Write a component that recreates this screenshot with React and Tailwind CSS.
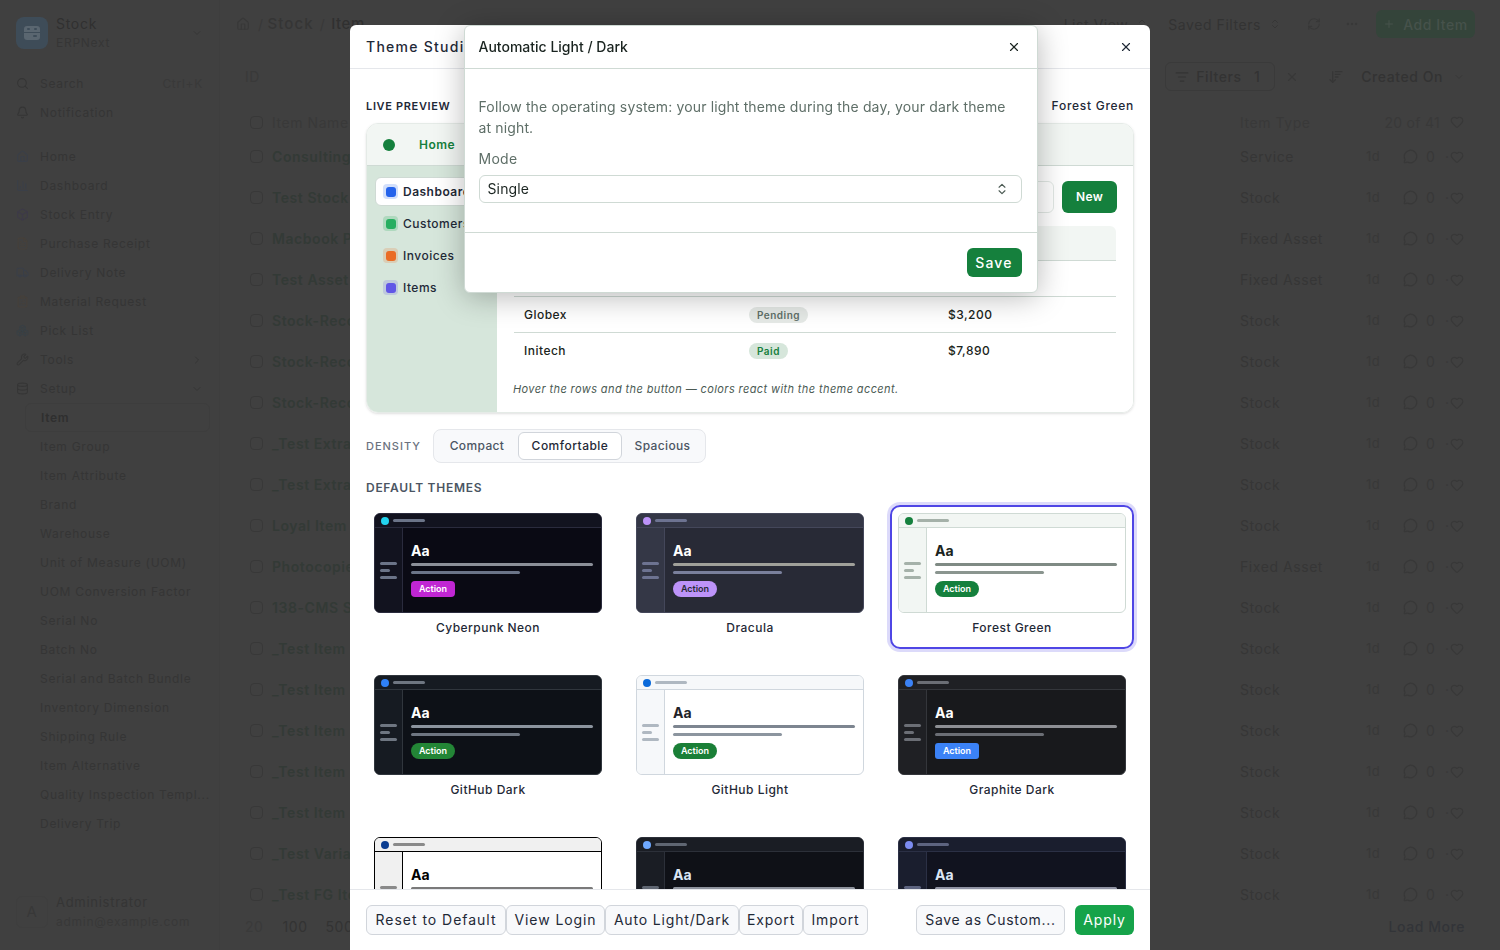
import React from "react";
import {
  Bell, BarChart3, Box, Boxes, ChevronDown, ChevronRight, ChevronsUpDown, ClipboardList, Database, FileText,
  Heart, Home, ListFilter, ArrowDownWideNarrow, MessageCircle, MoreHorizontal, Plus, RefreshCw, Search, Truck, Wrench, X,
} from "lucide-react";

const navTop = [
  { name: "Home", icon: Home, color: "text-[#3a3f48]" },
  { name: "Dashboard", icon: BarChart3, color: "text-[#3a3f48]" },
  { name: "Stock Entry", icon: Box, color: "text-[#3d3a48]" },
  { name: "Purchase Receipt", icon: FileText, color: "text-[#46403a]" },
  { name: "Delivery Note", icon: Truck, color: "text-[#3a3f48]" },
  { name: "Material Request", icon: ClipboardList, color: "text-[#46403a]" },
  { name: "Pick List", icon: Boxes, color: "text-[#394045]" },
  { name: "Tools", icon: Wrench, color: "text-[#363636]", right: "r" },
  { name: "Setup", icon: Database, color: "text-[#363636]", right: "d" },
];

const navSub = [
  "Item", "Item Group", "Item Attribute", "Brand", "Warehouse", "Unit of Measure (UOM)", "UOM Conversion Factor",
  "Serial No", "Batch No", "Serial and Batch Bundle", "Inventory Dimension", "Shipping Rule", "Item Alternative",
  "Quality Inspection Templ...", "Delivery Trip",
];

const rows = [
  ["Consulting", "Service"], ["Test Stock", "Stock"], ["Macbook Pro", "Fixed Asset"], ["Test Asset", "Fixed Asset"],
  ["Stock-Reco", "Stock"], ["Stock-Reco", "Stock"], ["Stock-Reco", "Stock"], ["_Test Extra", "Stock"], ["_Test Extra", "Stock"],
  ["Loyal Item", "Stock"], ["Photocopier", "Fixed Asset"], ["138-CMS S", "Stock"], ["_Test Item", "Stock"], ["_Test Item", "Stock"],
  ["_Test Item", "Stock"], ["_Test Item", "Stock"], ["_Test Item", "Stock"], ["_Test Varia", "Stock"], ["_Test FG Item", "Stock"],
];

const themes = [
  { name: "Cyberpunk Neon", top: "bg-[#12131f]", main: "bg-[#0a0a14]", line: "border-[#2a2b3d]", dot: "bg-[#22d3ee]", bar: "bg-[#6b7488]", text: "text-white", l1: "bg-[#8b8f98]", l2: "bg-[#6b7488]", btn: "bg-[#c026d3] text-white rounded-[4px]" },
  { name: "Dracula", top: "bg-[#343746]", main: "bg-[#282a36]", line: "border-[#44475a]", dot: "bg-[#bd93f9]", bar: "bg-[#6d7391]", text: "text-white", l1: "bg-[#a0a09a]", l2: "bg-[#7a809c]", btn: "bg-[#bd93f9] text-[#282a36] rounded-full" },
  { name: "Forest Green", top: "bg-[#f2f6f3]", main: "bg-white", line: "border-[#cfdad4]", dot: "bg-[#15803d]", bar: "bg-[#a5b1a9]", text: "text-[#1a2420]", l1: "bg-[#7f8a84]", l2: "bg-[#8a958f]", btn: "bg-[#15803d] text-white rounded-full", selected: true },
  { name: "GitHub Dark", top: "bg-[#161b22]", main: "bg-[#0d1117]", line: "border-[#30363d]", dot: "bg-[#2f81f7]", bar: "bg-[#6e7681]", text: "text-white", l1: "bg-[#8b949e]", l2: "bg-[#6e7681]", btn: "bg-[#238636] text-white rounded-full" },
  { name: "GitHub Light", top: "bg-[#f6f8fa]", main: "bg-white", line: "border-[#d0d7de]", dot: "bg-[#0969da]", bar: "bg-[#afb8c1]", text: "text-[#1f2328]", l1: "bg-[#7d8590]", l2: "bg-[#8c959f]", btn: "bg-[#1a7f37] text-white rounded-full" },
  { name: "Graphite Dark", top: "bg-[#1f2024]", main: "bg-[#18191c]", line: "border-[#34363b]", dot: "bg-[#3b82f6]", bar: "bg-[#6b6e75]", text: "text-white", l1: "bg-[#8d8f94]", l2: "bg-[#6b6e75]", btn: "bg-[#3b82f6] text-white rounded-[3px]" },
  // last row is cut off by the footer, name and button never show
  { top: "bg-[#f0f0f0]", main: "bg-white", line: "border-black", dot: "bg-[#0b3d91]", bar: "bg-[#8a8a8a]", text: "text-black", l1: "bg-[#7a7a7a]", l2: "bg-[#7a7a7a]" },
  { top: "bg-[#1a1d24]", main: "bg-[#0f1117]", line: "border-[#2c3039]", dot: "bg-[#6ea8fe]", bar: "bg-[#5f6672]", text: "text-[#dbe6f5]", l1: "bg-[#8d929c]", l2: "bg-[#5f6672]" },
  { top: "bg-[#1a1e2e]", main: "bg-[#11131f]", line: "border-[#2b3045]", dot: "bg-[#7c8cf0]", bar: "bg-[#5d6480]", text: "text-[#dbe6f5]", l1: "bg-[#8f92a3]", l2: "bg-[#5d6480]" },
];

function StockLogo() {
  return (
    <svg width="18" height="18" viewBox="0 0 18 18">
      <rect x="1" y="2" width="16" height="14" rx="3" fill="#5a6670" />
      <rect x="4" y="4" width="3" height="2" rx="1" fill="#3e4c58" />
      <rect x="11" y="4" width="3" height="2" rx="1" fill="#3e4c58" />
      <rect x="1" y="8" width="16" height="1" fill="#3e4c58" />
      <rect x="10" y="11" width="4" height="2" rx="1" fill="#3e4c58" />
    </svg>
  );
}

// the page under the modal, already dimmed
function PageBehind() {
  return (
    <div className="flex h-[950px] overflow-hidden bg-[#404040]">
      {/* Sidebar */}
      <aside className="flex w-[220px] shrink-0 flex-col border-r border-[#3e3e3e] text-[12px] tracking-[0.06em] text-[#353535]">
        <div className="flex h-[65px] items-center gap-2 px-4">
          <div className="flex size-8 items-center justify-center rounded-lg bg-[#3e4c58]"><StockLogo /></div>
          <div className="flex-1 leading-[19px]">
            <div className="text-[14px] text-[#303030]">Stock</div>
            <div className="text-[12px] text-[#363636]">ERPNext</div>
          </div>
          <ChevronDown size={12} className="text-[#363636]" />
        </div>
        <div className="mt-[4px] flex h-[29px] items-center gap-[11px] px-4"><Search size={13} /><span className="flex-1">Search</span><span className="text-[#393939]">Ctrl+K</span></div>
        <div className="flex h-[29px] items-center gap-[11px] px-4"><Bell size={13} /><span>Notification</span></div>
        <div className="mt-[15px] flex-1 overflow-hidden">
          {navTop.map((n) => (
            <div key={n.name} className="flex h-[29px] items-center gap-[11px] px-4">
              <n.icon size={13} className={n.color} />
              <span className="flex-1">{n.name}</span>
              {n.right === "r" && <ChevronRight size={12} />}
              {n.right === "d" && <ChevronDown size={12} />}
            </div>
          ))}
          {navSub.map((n, i) => (
            <div key={n} className={`ml-[25px] mr-[9px] flex h-[29px] items-center whitespace-nowrap rounded-md pl-[15px] ${i === 0 ? "border border-[#3d3d3d] font-semibold text-[#2f2f2f]" : ""}`}>{n}</div>
          ))}
        </div>
        <div className="flex h-[72px] items-center gap-2 px-4 pb-[4px]">
          <div className="flex size-8 items-center justify-center rounded-md border border-[#3e3e3e] text-[15px] text-[#383838]">A</div>
          <div className="leading-[19px]">
            <div className="text-[13px] text-[#353535]">Administrator</div>
            <div className="text-[12px] text-[#383838]">admin@example.com</div>
          </div>
        </div>
      </aside>

      {/* List */}
      <main className="flex min-w-0 flex-1 flex-col text-[14px] tracking-[0.04em] text-[#363636]">
        <div className="flex h-[48px] items-center pl-[16px] pr-[25px]">
          <Home size={14} className="text-[#383838]" />
          <span className="ml-[8px] text-[#383838]">/</span>
          <span className="ml-[4px] text-[15px] font-medium tracking-[0.07em] text-[#353535]">Stock</span>
          <span className="ml-[6px] text-[#383838]">/</span>
          <span className="ml-[6px] text-[15px] font-medium text-[#303030]">Item</span>
          <span className="ml-auto text-[#333333]">List View</span>
          <ChevronsUpDown size={12} className="ml-2 mr-[20px] text-[#363636]" />
          <span className="text-[#333333]">Saved Filters</span>
          <ChevronsUpDown size={12} className="ml-2 mr-[26px] text-[#363636]" />
          <RefreshCw size={14} className="mr-[24px] text-[#383838]" />
          <MoreHorizontal size={14} className="mr-[17px] text-[#383838]" />
          <div className="flex h-[28px] w-[99px] items-center justify-center gap-2 rounded-md bg-[#34443a] text-[#46524b]"><Plus size={12} /><span className="font-medium">Add Item</span></div>
        </div>
        <div className="flex h-[57px] items-center pl-[25px] pr-[35px]">
          <span className="text-[#393939]">ID</span>
          <div className="ml-auto flex h-[29px] w-[110px] items-center gap-[7px] rounded-md border border-[#3a3a3a] pl-[9px] font-medium text-[#333333]"><ListFilter size={14} /><span>Filters</span><span className="ml-auto pr-[14px]">1</span></div>
          <X size={14} className="ml-[10px] text-[#383838]" />
          <ArrowDownWideNarrow size={16} className="ml-[29px] text-[#363636]" />
          <span className="ml-[17px] font-medium text-[#333333]">Created On</span>
          <ChevronDown size={12} className="ml-[10px] text-[#383838]" />
        </div>
        <div className="flex h-[31px] items-center pl-[30px] pr-[36px] pt-[3px] text-[#393939]">
          <div className="size-[13px] shrink-0 rounded-[4px] border border-[#383838]" />
          <span className="ml-[9px] w-[968px] shrink-0">Item Name</span>
          <span>Item Type</span>
          <span className="ml-auto mr-[10px] tracking-[0.02em]">20 of 41</span>
          <Heart size={14} className="text-[#383838]" />
        </div>
        <div className="flex-1 overflow-hidden">
          {rows.map((r, i) => (
            <div key={i} className="flex h-[41px] items-center pl-[30px] pr-[36px]">
              <div className="size-[13px] shrink-0 rounded-[4px] border border-[#383838]" />
              <span className="ml-[9px] w-[968px] shrink-0 font-semibold text-[#333a36]">{r[0]}</span>
              <span className="w-[126px] shrink-0">{r[1]}</span>
              <span className="w-[37px] shrink-0 text-[13px] text-[#383838]">1d</span>
              <MessageCircle size={15} className="shrink-0 text-[#383838]" />
              <span className="ml-2 w-[19px] shrink-0 text-[#383838]">0</span>
              <span className="w-[5px] shrink-0 text-[#383838]">·</span>
              <Heart size={14} className="shrink-0 text-[#383838]" />
            </div>
          ))}
        </div>
        <div className="flex h-[48px] items-center pl-[25px] pr-[35px] text-[#333333]">
          <span className="text-[#3a3a3a]">20</span>
          <span className="ml-[19px]">100</span>
          <span className="ml-[18px]">500</span>
          <span className="ml-auto font-medium text-[#323438]">Load More</span>
        </div>
      </main>
    </div>
  );
}

function ThemeCard({ t }) {
  return (
    <div className={`h-[144px] w-[244px] rounded-[10px] border-2 p-[6px] ${t.selected ? "border-[#4f46e5] ring-[3px] ring-[#4f46e5]/20" : "border-transparent"}`}>
      <div className={`h-[100px] overflow-hidden rounded-[6px] border ${t.line} ${t.main}`}>
        <div className={`flex h-[14px] items-center gap-[4px] border-b pl-[6px] ${t.line} ${t.top}`}>
          <span className={`size-[8px] rounded-full ${t.dot}`} />
          <span className={`h-[3px] w-[32px] rounded-full ${t.bar}`} />
        </div>
        <div className="flex h-[85px]">
          <div className={`flex w-[28px] shrink-0 flex-col justify-center gap-[4px] border-r pl-[5px] ${t.line} ${t.top}`}>
            <span className={`h-[3px] w-[17px] rounded-full ${t.bar}`} />
            <span className={`h-[3px] w-[10px] rounded-full ${t.bar}`} />
            <span className={`h-[3px] w-[17px] rounded-full ${t.bar}`} />
          </div>
          <div className="flex-1 pl-[8px] pr-[8px] pt-[14px]">
            <div className={`text-[14px] font-bold leading-[18px] ${t.text}`}>Aa</div>
            <div className={`mt-[3px] h-[3px] rounded-full ${t.l1}`} />
            <div className={`mt-[5px] h-[3px] w-[109px] rounded-full ${t.l2}`} />
            {t.btn && <div className={`mt-[7px] flex h-[16px] w-[44px] items-center justify-center text-[9px] font-semibold ${t.btn}`}>Action</div>}
          </div>
        </div>
      </div>
      {t.name && <div className="mt-[6px] text-center text-[12px] font-medium leading-[18px] tracking-[0.04em] text-[#1f2937]">{t.name}</div>}
    </div>
  );
}

function TableRow({ name, status, amount, tone }) {
  return (
    <div className="grid h-[36px] grid-cols-[225px_199px_1fr] items-center border-t border-[#cfdad4] pl-[10px] text-[12px] font-medium tracking-[0.04em] text-[#1a2420]">
      <span>{name}</span>
      <span><span className={`rounded-full px-2 py-[2px] text-[10px] font-semibold ${tone}`}>{status}</span></span>
      <span>{amount}</span>
    </div>
  );
}

function FootBtn({ className, children }) {
  return <button className={`h-[30px] shrink-0 whitespace-nowrap rounded-md border border-[#d1d5db] bg-[#f8f9fb] pb-[1px] text-[14px] text-[#1f2937] ${className}`}>{children}</button>;
}

function ThemeStudio() {
  return (
    <div className="fixed inset-0 flex justify-center pt-[25px]">
      <div className="flex h-[925px] w-[800px] flex-col rounded-t-md bg-white">
        <div className="flex h-[44px] shrink-0 items-center justify-between border-b border-[#e5e7eb] pl-4 pr-[17px]">
          <span className="text-[14px] font-medium tracking-[0.09em] text-[#1f2937]">Theme Studio</span>
          <X size={14} className="text-[#1f2937]" />
        </div>

        <div className="flex-1 overflow-hidden px-4">
          <div className="flex h-[54px] items-end justify-between pb-[8px] leading-[18px]">
            <span className="text-[11px] font-semibold tracking-[0.06em] text-[#1f2937]">LIVE PREVIEW</span>
            <span className="text-[12px] font-medium tracking-[0.06em] text-[#1f2937]">Forest Green</span>
          </div>

          {/* Preview of the active theme */}
          <div className="h-[290px] overflow-hidden rounded-xl border border-[#e5ebe7] shadow-sm">
            <div className="flex h-[42px] items-center gap-[24px] border-b border-[#cfdad4] bg-[#f2f6f3] pl-[16px]">
              <span className="size-[12px] rounded-full bg-[#15803d]" />
              <span className="text-[12px] font-semibold tracking-[0.04em] text-[#15803d]">Home</span>
            </div>
            <div className="flex h-[247px]">
              <div className="w-[130px] shrink-0 bg-[#d6e6db] px-[8px] pt-[11px] text-[12px] tracking-[0.04em] text-[#1f2937]">
                <div className="flex h-[29px] items-center gap-[5px] rounded-md border border-[#cfdad4] bg-white pl-[7px] font-semibold"><span className="flex size-[15px] items-center justify-center rounded-[4px] bg-[#2563eb]/20"><span className="size-[10px] rounded-[3px] bg-[#2563eb]" /></span>Dashboard</div>
                <div className="mt-[3px] flex h-[29px] items-center gap-[5px] pl-[8px] font-medium"><span className="flex size-[15px] items-center justify-center rounded-[4px] bg-[#16a34a]/20"><span className="size-[10px] rounded-[3px] bg-[#27ae60]" /></span>Customers</div>
                <div className="mt-[3px] flex h-[29px] items-center gap-[5px] pl-[8px] font-medium"><span className="flex size-[15px] items-center justify-center rounded-[4px] bg-[#ea6c25]/20"><span className="size-[10px] rounded-[3px] bg-[#ea6c25]" /></span>Invoices</div>
                <div className="mt-[3px] flex h-[29px] items-center gap-[5px] pl-[8px] font-medium"><span className="flex size-[15px] items-center justify-center rounded-[4px] bg-[#6056e6]/20"><span className="size-[10px] rounded-[3px] bg-[#6056e6]" /></span>Items</div>
              </div>
              <div className="flex-1 bg-white pl-[17px] pr-[17px] pt-[15px]">
                <div className="-mr-[1px] flex h-[32px] justify-end gap-2">
                  <div className="w-[200px] rounded-md border border-[#e1e8e4]" />
                  <button className="h-[32px] w-[55px] rounded-md bg-[#15803d] text-[12px] font-semibold tracking-[0.03em] text-white">New</button>
                </div>
                <div className="mt-[13px] h-[35px] rounded-t-md border-b border-[#cfdad4] bg-[#f2f6f3]" />
                <div className="[&>*:first-child]:h-[35px] [&>*:first-child]:border-t-0">
                  <TableRow name="Acme" status="Paid" amount="$12,450" tone="bg-[#d6e6db] text-[#15803d]" />
                  <TableRow name="Globex" status="Pending" amount="$3,200" tone="bg-[#e5e9e6] text-[#5f6f68]" />
                  <TableRow name="Initech" status="Paid" amount="$7,890" tone="bg-[#d6e6db] text-[#15803d]" />
                </div>
                <p className="ml-[-1px] mt-[13px] text-[11px] italic tracking-[0.036em] text-[#4b5a53]">Hover the rows and the button — colors react with the theme accent.</p>
              </div>
            </div>
          </div>

          <div className="mt-[16px] flex items-center gap-[12px]">
            <span className="w-[55px] text-[11px] font-medium tracking-[0.09em] text-[#6b7280]">DENSITY</span>
            <div className="flex h-[34px] w-[273px] items-center rounded-lg border border-[#e5e7eb] bg-[#f8f9fb] px-[2px] text-[12px] font-medium tracking-[0.03em] text-[#4b5563]">
              <span className="w-[82px] text-center">Compact</span>
              <span className="flex h-[28px] w-[104px] items-center justify-center rounded-md border border-[#d1d5db] bg-white tracking-[0.04em] text-[#1f2937]">Comfortable</span>
              <span className="w-[81px] text-center">Spacious</span>
            </div>
          </div>

          <div className="mt-[16px] text-[12px] font-semibold leading-[18px] tracking-[0.06em] text-[#4b5563]">DEFAULT THEMES</div>

          <div className="mt-[8px] grid grid-cols-[244px_244px_244px] gap-[18px]">
            {themes.map((t, i) => <ThemeCard key={i} t={t} />)}
          </div>
        </div>

        <div className="flex h-[61px] shrink-0 items-center border-t border-[#e5e7eb] bg-white px-4">
          <FootBtn className="w-[140px] tracking-[0.07em]">Reset to Default</FootBtn>
          <FootBtn className="w-[99px] tracking-[0.065em]">View Login</FootBtn>
          <FootBtn className="w-[134px] tracking-[0.06em]">Auto Light/Dark</FootBtn>
          <FootBtn className="w-[64px] tracking-[0.06em]">Export</FootBtn>
          <FootBtn className="w-[65px] tracking-[0.06em]">Import</FootBtn>
          <div className="ml-auto flex gap-[10px]">
            <FootBtn className="w-[149px] tracking-[0.05em]">Save as Custom...</FootBtn>
            <button className="h-[30px] w-[59px] rounded-md bg-[#16a34a] pb-[1px] text-[14px] tracking-[0.06em] text-white">Apply</button>
          </div>
        </div>
      </div>
    </div>
  );
}

function AutoDialog() {
  return (
    <div className="fixed inset-0 flex justify-center pl-[1px] pt-[25px]">
      <div className="h-[268px] w-[574px] rounded-md border border-[#cfdad4] bg-white shadow-[0_4px_30px_rgba(0,0,0,0.28)]">
        <div className="flex h-[43px] items-center justify-between border-b border-[#cfdad4] pl-[14px] pr-[16px]">
          <span className="pb-[1px] text-[14px] font-medium text-[#1a2420]">Automatic Light / Dark</span>
          <X size={14} className="text-[#1a2420]" />
        </div>
        <div className="h-[164px] border-b border-[#cfdad4] pl-[14px] pr-[15px] pt-[27px]">
          <p className="text-[14px] leading-[21px] tracking-[0.01em] text-[#5f6f68]">Follow the operating system: your light theme during the day, your dark theme at night.</p>
          <div className="mt-[10px] text-[14px] leading-[21px] tracking-[0.02em] text-[#5f6f68]">Mode</div>
          <div className="mt-[6px] flex h-[28px] items-center justify-between rounded-md border border-[#cfdad4] pb-[1px] pl-[8px] pr-[12px] text-[14px] tracking-[0.01em] text-[#1a2420]">
            <span>Single</span>
            <ChevronsUpDown size={14} className="text-[#4b5a53]" />
          </div>
        </div>
        <div className="flex justify-end px-[15px] pt-[15px]">
          <button className="h-[29px] w-[55px] rounded-md bg-[#15803d] text-[14px] font-medium tracking-[0.08em] text-white">Save</button>
        </div>
      </div>
    </div>
  );
}

export default function App() {
  return (
    <div className="[font-family:Inter,sans-serif]">
      <PageBehind />
      <ThemeStudio />
      <AutoDialog />
    </div>
  );
}
